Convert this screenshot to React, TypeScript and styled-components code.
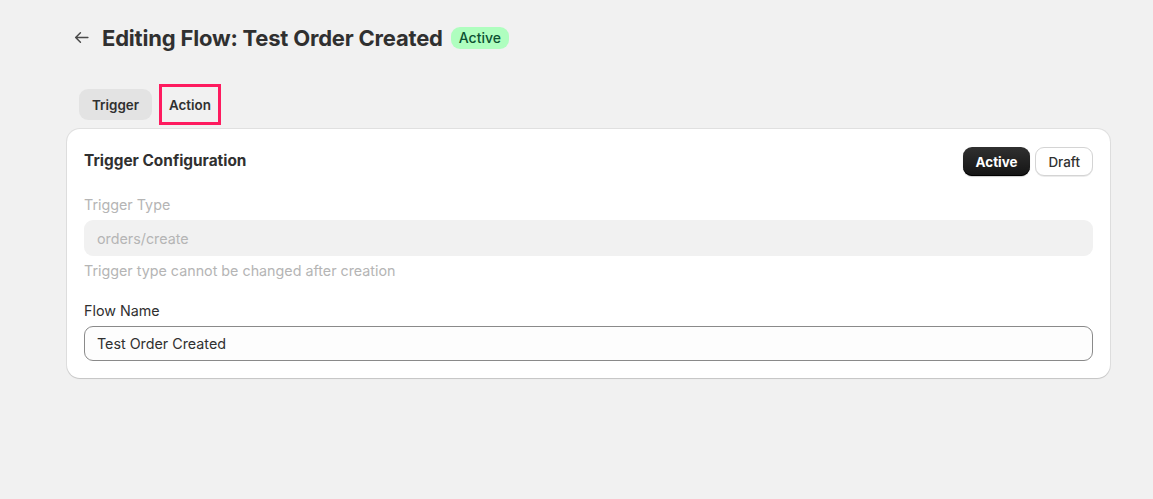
import styled, { createGlobalStyle } from "styled-components";

const GlobalStyle = createGlobalStyle`
  html, body {
    margin: 0;
    padding: 0;
    background: #f1f1f1;
  }
  body {
    font-family: Inter, "Noto Sans", sans-serif;
    font-size: 14.3px;
    color: #303030;
    -webkit-font-smoothing: antialiased;
  }
`;

const Page = styled.div`
  box-sizing: border-box;
  width: 100%;
  min-height: 499px;
  padding: 22px 43px 0 67px;
`;

const Header = styled.div`
  display: flex;
  align-items: center;
  height: 31px;
`;

const BackButton = styled.button`
  display: flex;
  align-items: center;
  justify-content: center;
  width: 28px;
  height: 28px;
  margin-right: 7px;
  padding: 0;
  border: none;
  border-radius: 8px;
  background: transparent;
  color: #4a4a4a;
  cursor: pointer;
`;

const Title = styled.h1`
  margin: 0;
  font-size: 22px;
  line-height: 26px;
  font-weight: 700;
  color: #303030;
  letter-spacing: -0.2px;
`;

const Badge = styled.span`
  margin-left: 8px;
  padding: 2px 8px;
  border-radius: 9px;
  background: #affebf;
  color: #0c5132;
  font-size: 14px;
  line-height: 18px;
  font-weight: 500;
`;

const Tabs = styled.div`
  display: flex;
  align-items: center;
  gap: 10px;
  margin-top: 34px;
  padding-left: 12px;
`;

const Tab = styled.button<{ $selected?: boolean; $focused?: boolean }>`
  box-sizing: border-box;
  height: ${(p) => (p.$focused ? 35 : 31)}px;
  padding: 0 ${(p) => (p.$focused ? 7 : 13)}px;
  border: none;
  border-radius: ${(p) => (p.$focused ? "0" : "9px")};
  background: ${(p) => (p.$selected ? "#e3e3e3" : "transparent")};
  color: #303030;
  font-family: inherit;
  font-size: 13.4px;
  font-weight: 600;
  cursor: pointer;
  outline: ${(p) => (p.$focused ? "3px solid #fe1b5f" : "none")};
  outline-offset: 0;
`;

const Card = styled.section`
  box-sizing: border-box;
  margin-top: 7px;
  padding: 18px 17px 17px;
  background: #ffffff;
  border-radius: 13px;
  box-shadow: 0 0 0 1px rgba(0, 0, 0, 0.07), 0 1px 1px rgba(0, 0, 0, 0.12);
`;

const CardHeader = styled.div`
  display: flex;
  align-items: center;
  justify-content: space-between;
  height: 29px;
`;

const CardTitle = styled.h2`
  margin: 0 0 2px;
  font-size: 15.4px;
  line-height: 22px;
  font-weight: 650;
  color: #303030;
`;

const Toggle = styled.div`
  display: flex;
  gap: 5px;
`;

const ToggleButton = styled.button<{ $primary?: boolean }>`
  box-sizing: border-box;
  height: 29px;
  padding: 0 ${(p) => (p.$primary ? 13 : 12)}px;
  border-radius: 9px;
  font-family: inherit;
  font-size: 13.4px;
  font-weight: ${(p) => (p.$primary ? 650 : 550)};
  cursor: pointer;
  border: ${(p) => (p.$primary ? "none" : "1px solid #d4d4d4")};
  color: ${(p) => (p.$primary ? "#ffffff" : "#303030")};
  background: ${(p) =>
    p.$primary ? "linear-gradient(180deg, #303030 0%, #141414 100%)" : "#ffffff"};
  box-shadow: ${(p) =>
    p.$primary
      ? "inset 0 -1px 0 #000, 0 1px 1px rgba(0,0,0,0.2)"
      : "0 1px 0 rgba(0,0,0,0.08)"};
`;

const Field = styled.div<{ $gap?: number }>`
  display: flex;
  flex-direction: column;
  margin-top: ${(p) => p.$gap ?? 0}px;
`;

const Label = styled.label<{ $disabled?: boolean }>`
  font-size: 14.3px;
  line-height: 22px;
  color: ${(p) => (p.$disabled ? "#b5b5b5" : "#303030")};
  margin-bottom: 4px;
`;

const Input = styled.input`
  box-sizing: border-box;
  width: 100%;
  height: 35px;
  padding: 0 12px;
  border: 1px solid #8a8a8a;
  border-radius: 9px;
  background: #fdfdfd;
  color: #303030;
  font-family: inherit;
  font-size: 14.3px;
  outline: none;

  &:disabled {
    height: 36px;
    border-color: transparent;
    background: #f1f1f1;
    color: #b5b5b5;
  }
`;

const HelpText = styled.span`
  margin-top: 4px;
  font-size: 14.3px;
  line-height: 22px;
  color: #b5b5b5;
`;

const ArrowLeft = () => (
  <svg width="17" height="17" viewBox="0 0 16 16" fill="none">
    <path
      d="M14 8H2.5M7 3.5L2.5 8L7 12.5"
      stroke="currentColor"
      strokeWidth="1.4"
      strokeLinecap="round"
      strokeLinejoin="round"
    />
  </svg>
);

const App = () => {
  return (
    <>
      <GlobalStyle />
      <Page>
        <Header>
          <BackButton aria-label="Back">
            <ArrowLeft />
          </BackButton>
          <Title>Editing Flow: Test Order Created</Title>
          <Badge>Active</Badge>
        </Header>

        <Tabs>
          <Tab $selected>Trigger</Tab>
          <Tab $focused>Action</Tab>
        </Tabs>

        <Card>
          <CardHeader>
            <CardTitle>Trigger Configuration</CardTitle>
            <Toggle>
              <ToggleButton $primary>Active</ToggleButton>
              <ToggleButton>Draft</ToggleButton>
            </Toggle>
          </CardHeader>

          <Field $gap={18}>
            <Label $disabled>Trigger Type</Label>
            <Input disabled value="orders/create" readOnly />
            <HelpText>Trigger type cannot be changed after creation</HelpText>
          </Field>

          <Field $gap={18}>
            <Label>Flow Name</Label>
            <Input defaultValue="Test Order Created" />
          </Field>
        </Card>
      </Page>
    </>
  );
};

export default App;
